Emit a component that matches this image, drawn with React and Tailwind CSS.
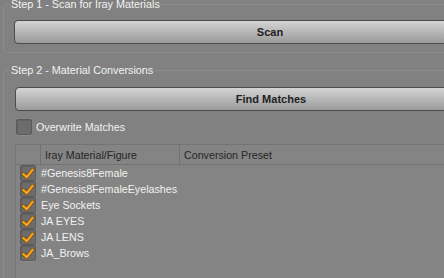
import React from 'react';

const rows = [
  '#Genesis8Female',
  '#Genesis8FemaleEyelashes',
  'Eye Sockets',
  'JA EYES',
  'JA LENS',
  'JA_Brows',
];

function Check({ checked }) {
  return (
    <div className="w-[16px] h-[16px] shrink-0 rounded-[2px] border border-[#5a5a5a] bg-[#6c6c6c] shadow-[inset_1px_1px_0_#626262,0_1px_0_#8e8e8e] flex items-center justify-center">
      {checked && (
        <svg width="15" height="15" viewBox="0 0 15 15">
          <path d="M2.5 8 L6 11.5 L12.5 3.5" fill="none" stroke="#7a4a08" strokeWidth="3.8" strokeLinecap="round" strokeLinejoin="round" />
          <path d="M2.5 8 L6 11.5 L12.5 3.5" fill="none" stroke="#f7a51e" strokeWidth="2.4" strokeLinecap="round" strokeLinejoin="round" />
        </svg>
      )}
    </div>
  );
}

function Button({ children }) {
  return (
    <button className="w-[512px] h-[24px] rounded-[4px] border border-[#4c4c4c] bg-gradient-to-b from-[#d4d4d4] to-[#9a9a9a] text-[#1e1e1e] font-bold text-[11px] leading-none">
      {children}
    </button>
  );
}

export default function App() {
  return (
    <div className="w-[444px] h-[278px] overflow-hidden bg-[#818181] font-['Liberation_Sans',Arial,sans-serif] text-[10.7px] text-[#f2f2f2]">
      <div className="w-[540px] pl-[3px]">
        <fieldset className="mt-[-3px] rounded-[4px] border border-[#8b8b8b] pl-[10px] pb-[8px]">
          <legend className="ml-[-3px] leading-[14px] text-[10.8px]">Step 1 - Scan for Iray Materials</legend>
          <div className="pt-[9px]">
            <Button>Scan</Button>
          </div>
        </fieldset>

        <fieldset className="mt-[10px] h-[300px] rounded-[4px] border border-[#8b8b8b] pl-[11px]">
          <legend className="ml-[-4px] leading-[14px] text-[10.8px]">Step 2 - Material Conversions</legend>
          <div className="pt-[10px]">
            <Button>Find Matches</Button>
          </div>
          <div className="flex items-center gap-[4px] mt-[8px] ml-px">
            <Check />
            <span>Overwrite Matches</span>
          </div>
          <div className="mt-[9px] border-l border-t border-[#747474] bg-[#848484] h-[200px]">
            <div className="flex h-[20px] border-b border-[#727272] text-[#262626]">
              <div className="w-[25px] border-r border-[#727272]" />
              <div className="w-[139px] border-r border-[#727272] pl-[4px] flex items-center">Iray Material/Figure</div>
              <div className="flex-1 pl-[4px] flex items-center">Conversion Preset</div>
            </div>
            <div>
              {rows.map((r) => (
                <div key={r} className="flex items-center h-[16px] pl-[4px] gap-[5px]">
                  <Check checked />
                  <span>{r}</span>
                </div>
              ))}
            </div>
          </div>
        </fieldset>
      </div>
    </div>
  );
}
